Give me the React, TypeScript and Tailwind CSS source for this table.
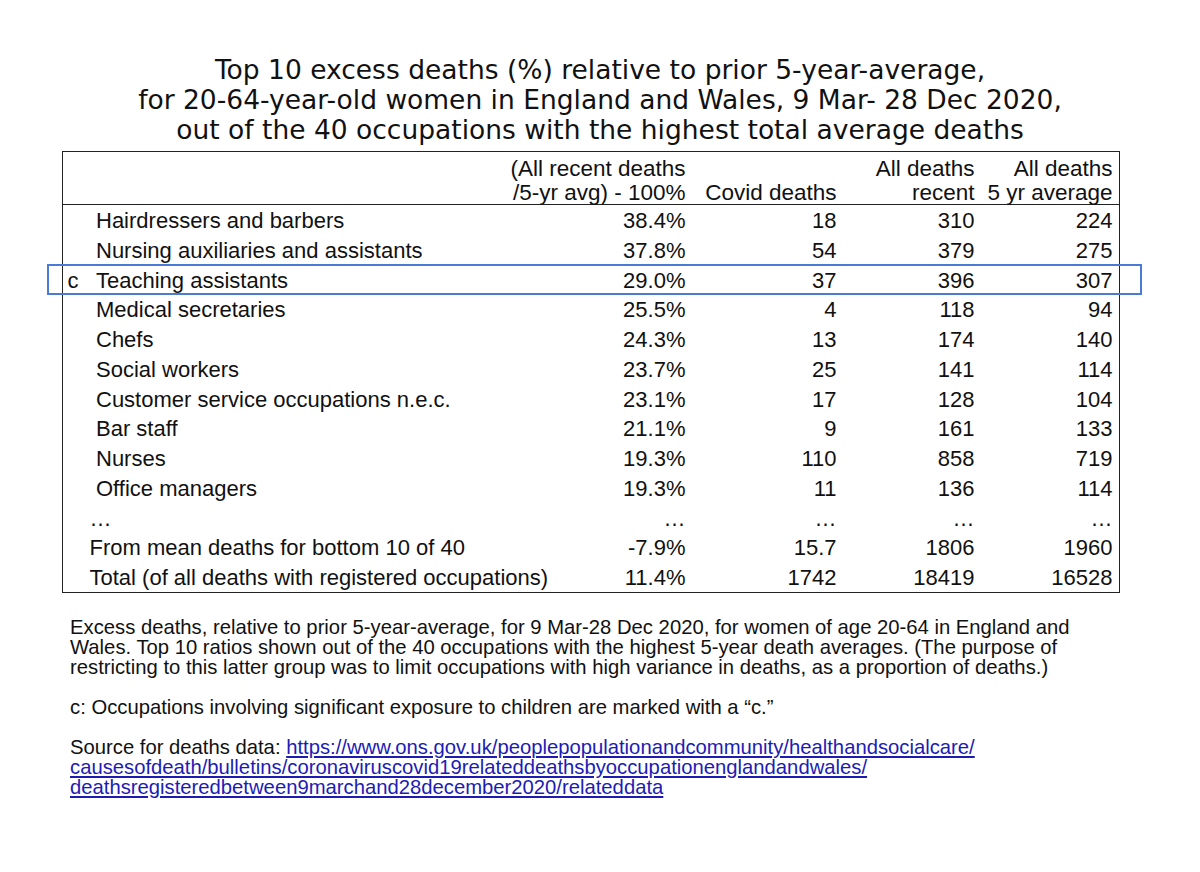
import React from "react";

type Row = {
  mark?: string;
  label: string;
  indent?: boolean;
  values: string[];
  highlight?: boolean;
};

const rows: Row[] = [
  { label: "Hairdressers and barbers", indent: true, values: ["38.4%", "18", "310", "224"] },
  { label: "Nursing auxiliaries and assistants", indent: true, values: ["37.8%", "54", "379", "275"] },
  { mark: "c", label: "Teaching assistants", indent: true, values: ["29.0%", "37", "396", "307"], highlight: true },
  { label: "Medical secretaries", indent: true, values: ["25.5%", "4", "118", "94"] },
  { label: "Chefs", indent: true, values: ["24.3%", "13", "174", "140"] },
  { label: "Social workers", indent: true, values: ["23.7%", "25", "141", "114"] },
  { label: "Customer service occupations n.e.c.", indent: true, values: ["23.1%", "17", "128", "104"] },
  { label: "Bar staff", indent: true, values: ["21.1%", "9", "161", "133"] },
  { label: "Nurses", indent: true, values: ["19.3%", "110", "858", "719"] },
  { label: "Office managers", indent: true, values: ["19.3%", "11", "136", "114"] },
  { label: "…", values: ["…", "…", "…", "…"] },
  { label: "From mean deaths for bottom 10 of 40", values: ["-7.9%", "15.7", "1806", "1960"] },
  { label: "Total (of all deaths with registered occupations)", values: ["11.4%", "1742", "18419", "16528"] },
];

const grid = "grid grid-cols-[430px_192.5px_151px_138px_138px]";

export default function App() {
  return (
    <div className="min-h-[872px] w-[1200px] bg-white text-[#111]">
      <h1 className="pt-[55px] text-center font-['DejaVu_Sans',sans-serif] text-[26.5px] leading-[30px] font-normal">
        Top 10 excess deaths (%) relative to prior 5-year-average,
        <br />
        for 20-64-year-old women in England and Wales, 9 Mar- 28 Dec 2020,
        <br />
        out of the 40 occupations with the highest total average deaths
      </h1>

      <div className="ml-[62px] mt-[6px] w-[1058px] border-[1.5px] border-[#222] font-['Liberation_Sans',Arial,sans-serif] text-[22px]">
        <div className={`${grid} border-b-[1.5px] border-[#222] pt-[5px] text-right text-[22.5px] leading-[23.5px]`}>
          <div />
          <div className="whitespace-nowrap">
            (All recent deaths
            <br />
            /5-yr avg) - 100%
          </div>
          <div className="self-end whitespace-nowrap">Covid deaths</div>
          <div className="whitespace-nowrap">
            All deaths
            <br />
            recent
          </div>
          <div className="whitespace-nowrap">
            All deaths
            <br />5 yr average
          </div>
        </div>

        {rows.map((row) => (
          <div
            key={row.label + row.values[1]}
            className={`${grid} relative h-[29.75px] items-center pt-[2px] leading-[27.75px]`}
          >
            {row.highlight && (
              <span className="pointer-events-none absolute -left-[16.5px] -right-[22.5px] -top-px -bottom-px border-2 border-[#4a7bd6]" />
            )}
            <div className="flex whitespace-nowrap">
              {row.indent ? (
                <>
                  <span className="w-[33px] pl-[4.5px]">{row.mark}</span>
                  <span>{row.label}</span>
                </>
              ) : (
                <span className="pl-[26.5px]">{row.label}</span>
              )}
            </div>
            {row.values.map((v, i) => (
              <div key={i} className="text-right">
                {v}
              </div>
            ))}
          </div>
        ))}
      </div>

      <div className="ml-[70px] mt-[24px] font-['Liberation_Sans',Arial,sans-serif] text-[20.25px] leading-[20px] text-[#111]">
        <p className="whitespace-nowrap">
          Excess deaths, relative to prior 5-year-average, for 9 Mar-28 Dec 2020, for women of age 20-64 in England and
          <br />
          Wales. Top 10 ratios shown out of the 40 occupations with the highest 5-year death averages. (The purpose of
          <br />
          restricting to this latter group was to limit occupations with high variance in deaths, as a proportion of deaths.)
        </p>
        <p className="mt-[20px]">c: Occupations involving significant exposure to children are marked with a “c.”</p>
        <p className="mt-[20px] whitespace-nowrap">
          Source for deaths data:{" "}
          <a className="text-[#1c1cb4] underline" href="#">
            https://www.ons.gov.uk/peoplepopulationandcommunity/healthandsocialcare/
            <br />
            causesofdeath/bulletins/coronaviruscovid19relateddeathsbyoccupationenglandandwales/
            <br />
            deathsregisteredbetween9marchand28december2020/relateddata
          </a>
        </p>
      </div>
    </div>
  );
}
